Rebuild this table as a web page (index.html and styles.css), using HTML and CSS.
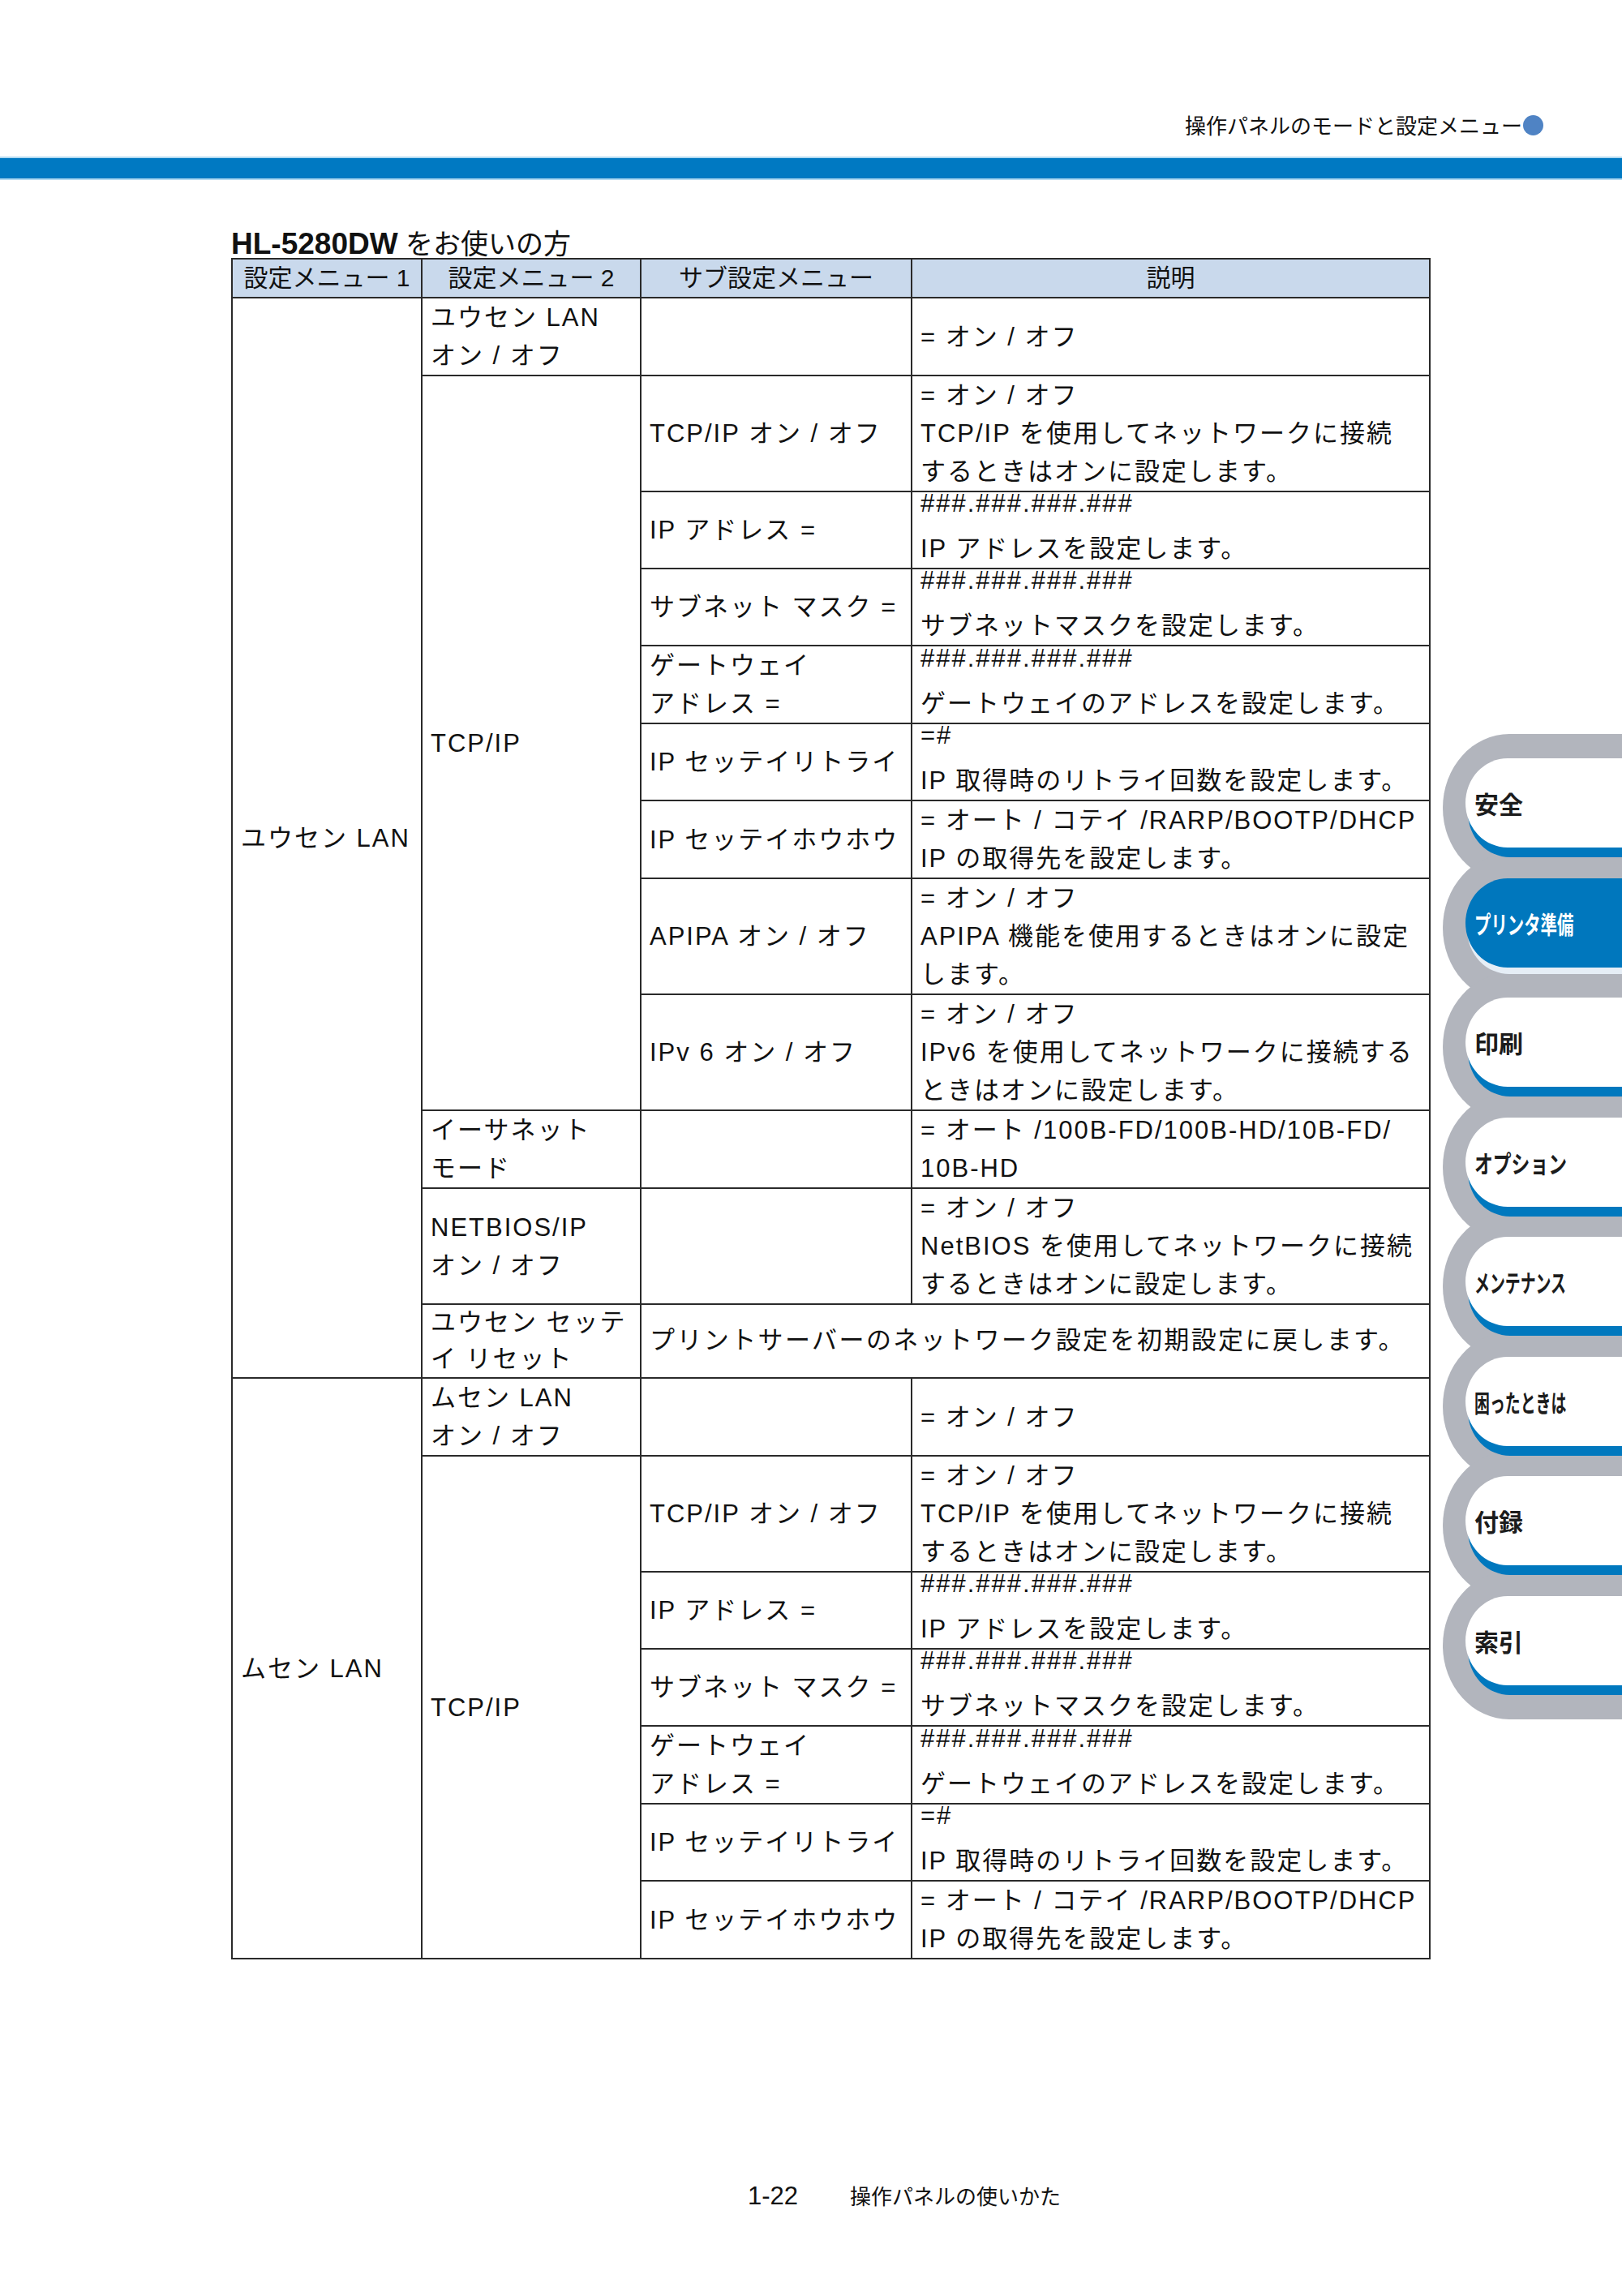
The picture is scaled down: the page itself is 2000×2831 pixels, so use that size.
FILE: index.html
```html
<!DOCTYPE html>
<html lang="ja">
<head>
<meta charset="utf-8">
<title>操作パネルのモードと設定メニュー</title>
<link rel="stylesheet" href="styles.css">
</head>
<body>
<div class="page">
  <header class="running">
    <span class="running-title">操作パネルのモードと設定メニュー</span><span class="dot"></span>
  </header>
  <div class="bar"></div>

  <main class="content">
    <h1 class="title"><b>HL-5280DW</b> をお使いの方</h1>
    <table class="menu">
      <colgroup><col class="c1"><col class="c2"><col class="c3"><col class="c4"></colgroup>
      <thead>
        <tr class="rh"><th>設定メニュー 1</th><th>設定メニュー 2</th><th>サブ設定メニュー</th><th>説明</th></tr>
      </thead>
      <tbody>
        <tr class="r2"><td rowspan="12">ユウセン LAN</td><td>ユウセン LAN<br>オン / オフ</td><td></td><td>= オン / オフ</td></tr>
        <tr class="r3"><td rowspan="8">TCP/IP</td><td>TCP/IP オン / オフ</td><td>= オン / オフ<br>TCP/IP を使用してネットワークに接続<br>するときはオンに設定します。</td></tr>
        <tr class="r2"><td>IP アドレス =</td><td><span class="hl">###.###.###.###</span>IP アドレスを設定します。</td></tr>
        <tr class="r2"><td>サブネット マスク =</td><td><span class="hl">###.###.###.###</span>サブネットマスクを設定します。</td></tr>
        <tr class="r2"><td>ゲートウェイ<br>アドレス =</td><td><span class="hl">###.###.###.###</span>ゲートウェイのアドレスを設定します。</td></tr>
        <tr class="r2"><td>IP セッテイリトライ</td><td><span class="hl">=#</span>IP 取得時のリトライ回数を設定します。</td></tr>
        <tr class="r2"><td>IP セッテイホウホウ</td><td>= オート / コテイ /RARP/BOOTP/DHCP<br>IP の取得先を設定します。</td></tr>
        <tr class="r3"><td>APIPA オン / オフ</td><td>= オン / オフ<br>APIPA 機能を使用するときはオンに設定<br>します。</td></tr>
        <tr class="r3"><td>IPv 6 オン / オフ</td><td>= オン / オフ<br>IPv6 を使用してネットワークに接続する<br>ときはオンに設定します。</td></tr>
        <tr class="r2"><td>イーサネット<br>モード</td><td></td><td>= オート /100B-FD/100B-HD/10B-FD/<br>10B-HD</td></tr>
        <tr class="r3"><td>NETBIOS/IP<br>オン / オフ</td><td></td><td>= オン / オフ<br>NetBIOS を使用してネットワークに接続<br>するときはオンに設定します。</td></tr>
        <tr class="r2s"><td>ユウセン セッテ<br>イ リセット</td><td colspan="2" class="spread">プリントサーバーのネットワーク設定を初期設定に戻します。</td></tr>

        <tr class="r2"><td rowspan="7">ムセン LAN</td><td>ムセン LAN<br>オン / オフ</td><td></td><td>= オン / オフ</td></tr>
        <tr class="r3"><td rowspan="6">TCP/IP</td><td>TCP/IP オン / オフ</td><td>= オン / オフ<br>TCP/IP を使用してネットワークに接続<br>するときはオンに設定します。</td></tr>
        <tr class="r2"><td>IP アドレス =</td><td><span class="hl">###.###.###.###</span>IP アドレスを設定します。</td></tr>
        <tr class="r2"><td>サブネット マスク =</td><td><span class="hl">###.###.###.###</span>サブネットマスクを設定します。</td></tr>
        <tr class="r2"><td>ゲートウェイ<br>アドレス =</td><td><span class="hl">###.###.###.###</span>ゲートウェイのアドレスを設定します。</td></tr>
        <tr class="r2"><td>IP セッテイリトライ</td><td><span class="hl">=#</span>IP 取得時のリトライ回数を設定します。</td></tr>
        <tr class="r2"><td>IP セッテイホウホウ</td><td>= オート / コテイ /RARP/BOOTP/DHCP<br>IP の取得先を設定します。</td></tr>
      </tbody>
    </table>
  </main>

  <footer class="folio"><span class="num">1-22</span><span class="chap">操作パネルの使いかた</span></footer>

  <nav class="tabs">
    <div class="tab"><div class="face"><span class="lbl">安全</span></div></div>
    <div class="tab active"><div class="face"><span class="lbl s6">プリンタ準備</span></div></div>
    <div class="tab"><div class="face"><span class="lbl">印刷</span></div></div>
    <div class="tab"><div class="face"><span class="lbl s5">オプション</span></div></div>
    <div class="tab"><div class="face"><span class="lbl s6b">メンテナンス</span></div></div>
    <div class="tab"><div class="face"><span class="lbl s6b">困ったときは</span></div></div>
    <div class="tab"><div class="face"><span class="lbl">付録</span></div></div>
    <div class="tab"><div class="face"><span class="lbl">索引</span></div></div>
  </nav>
</div>
</body>
</html>
```

FILE: styles.css
```css
html, body {
  margin: 0;
  padding: 0;
  background: #ffffff;
}

.page {
  position: relative;
  width: 2000px;
  height: 2831px;
  overflow: hidden;
  display: flex;
  flex-direction: column;
  font-family: "Liberation Sans", "Noto Sans CJK JP", sans-serif;
  color: #111111;
}

/* running head */
.running {
  display: flex;
  justify-content: flex-end;
  align-items: center;
  height: 28px;
  padding: 140px 97px 25px 0;
}

.running-title {
  font-family: "Noto Sans CJK JP", sans-serif;
  font-size: 26px;
  line-height: 28px;
  color: #111;
}

.dot {
  width: 25px;
  height: 25px;
  border-radius: 50%;
  background: #4f83c4;
  margin-left: 1px;
}

.bar {
  height: 25px;
  background: #0079c2;
  border-top: 2px solid #b2daf1;
  border-bottom: 2px solid #b2daf1;
}

/* content */
.content {
  padding: 62px 0 0 285px;
}

.title {
  margin: 0;
  height: 34px;
  font-size: 34px;
  line-height: 34px;
  font-weight: normal;
  white-space: nowrap;
}

.title b {
  font-size: 37px;
  font-weight: bold;
}

.menu {
  border-collapse: collapse;
  table-layout: fixed;
  width: 1477px;
  font-size: 31px;
  letter-spacing: 2px;
}

.c1 { width: 234px; }
.c2 { width: 270px; }
.c3 { width: 334px; }
.c4 { width: 639px; }

.menu th,
.menu td {
  border: 2px solid #2a2a2a;
  padding: 0 10px;
  line-height: 47px;
  vertical-align: middle;
  text-align: left;
  white-space: nowrap;
  font-weight: normal;
  overflow: visible;
}

.menu th {
  background: #c9d9ec;
  text-align: center;
  font-size: 30px;
  letter-spacing: 0;
  line-height: 44px;
}

.rh { height: 48px; }
.r2 { height: 93.6px; }
.r2s { height: 90px; }
.r3 { height: 140.8px; }

.menu .r2s td {
  line-height: 44.5px;
}

.menu td.spread {
  letter-spacing: 2.4px;
}

.hl {
  display: block;
  line-height: 28px;
  margin-bottom: 18px;
}

/* footer */
.folio {
  margin-top: auto;
  margin-bottom: 107px;
  height: 34px;
  display: flex;
  align-items: baseline;
  padding-left: 922px;
  line-height: 34px;
}

.num {
  font-family: "Liberation Sans", sans-serif;
  font-size: 31px;
}

.chap {
  font-family: "Noto Sans CJK JP", sans-serif;
  font-size: 26px;
  margin-left: 64px;
}

/* side index tabs */
.tabs {
  position: absolute;
  top: 905px;
  left: 1779px;
  width: 260px;
  z-index: 1;
}

.tab {
  position: relative;
  height: 182px;
  box-sizing: border-box;
  padding: 30px 0 0 28px;
}

.tab + .tab {
  margin-top: -34.5px;
}

.tab::before {
  content: "";
  position: absolute;
  inset: 0;
  background: #b2b5bd;
  border-radius: 82px 0 0 82px / 91px 0 0 91px;
  z-index: -1;
}

.face {
  height: 110px;
  background: #ffffff;
  border-radius: 52px 0 0 52px / 55px 0 0 55px;
  box-shadow: 3px 12px 0 0 #0078be;
  display: flex;
  align-items: center;
  padding-left: 11px;
  font-family: "Noto Sans CJK JP", sans-serif;
  font-weight: 700;
  font-size: 30px;
  color: #1c1c1c;
  white-space: nowrap;
}

.tab.active .face {
  background: #0077bd;
  color: #ffffff;
  box-shadow: 2px 8px 0 0 #e6eef6;
}

.lbl {
  display: inline-block;
  transform-origin: left center;
}

.lbl.s6 { transform: scaleX(0.68); }
.lbl.s5 { transform: scaleX(0.76); }
.lbl.s6b { transform: scaleX(0.63); }
```
